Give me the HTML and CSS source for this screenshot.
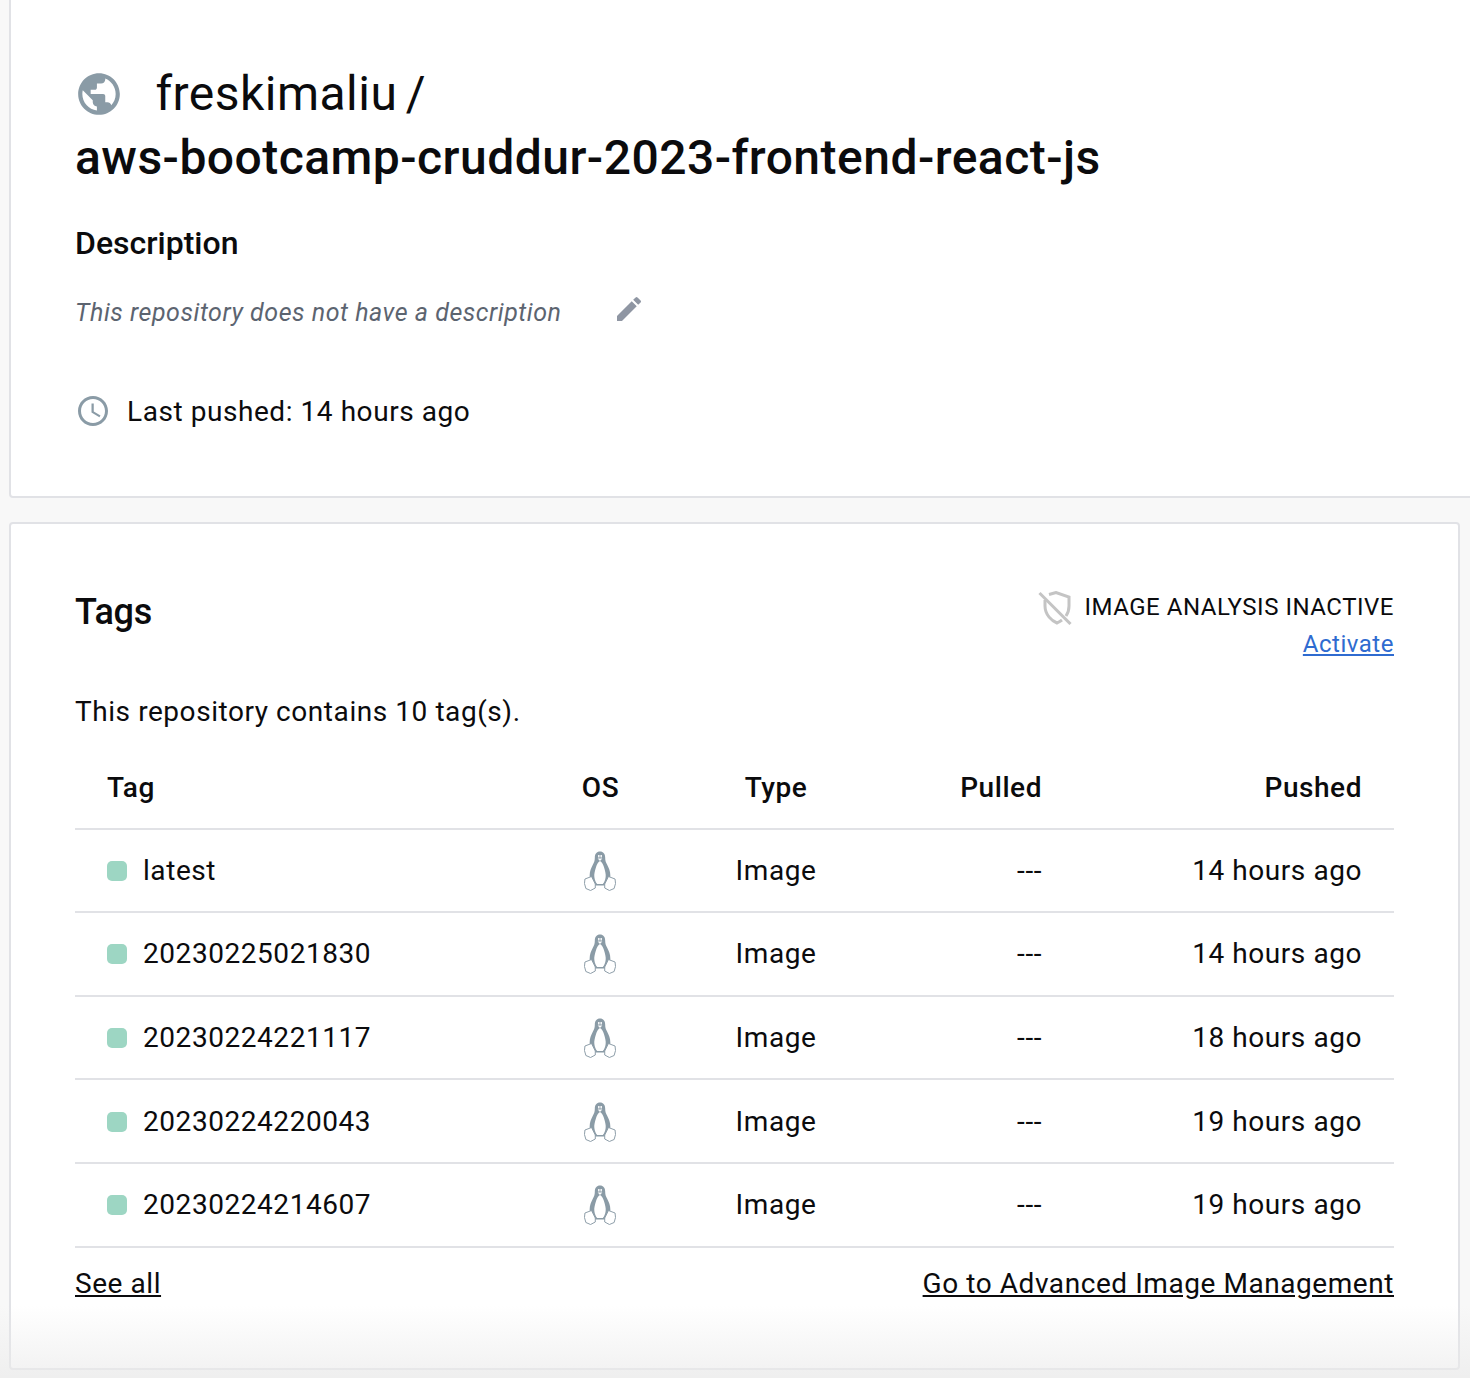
FILE: index.html
```html
<!DOCTYPE html>
<html lang="en">
<head>
<meta charset="UTF-8">
<meta name="viewport" content="width=device-width, initial-scale=1.0">
<title>Repository</title>
<link rel="stylesheet" href="styles.css">
</head>
<body>
    <!-- Repository summary -->
    <div class="card card-top">
        <h1 class="repo-title">
            <svg class="globe" viewBox="0 0 24 24"><path d="M12 2C6.48 2 2 6.48 2 12s4.48 10 10 10 10-4.48 10-10S17.52 2 12 2zm-1 17.930c-3.950-.49-7-3.850-7-7.930 0-.62.08-1.210.21-1.790L9 15v1c0 1.100.9 2 2 2v1.930zm6.900-2.540c-.26-.81-1-1.390-1.900-1.390h-1v-3c0-.55-.45-1-1-1H8v-2h2c.55 0 1-.45 1-1V7h2c1.100 0 2-.9 2-2v-.41c2.930 1.190 5 4.060 5 7.410 0 2.080-.8 3.970-2.100 5.390z"/></svg>
            <span class="repo-owner">freskimaliu /</span>
            <span class="repo-name">aws-bootcamp-cruddur-2023-frontend-react-js</span>
        </h1>
        <h2 class="desc-title">Description</h2>
        <div class="desc-row">
            <em class="desc-text">This repository does not have a description</em>
            <svg class="pencil" viewBox="0 0 24 24"><path d="M3 17.250V21h3.750L17.810 9.940l-3.750-3.750L3 17.250zM20.710 7.040a1 1 0 0 0 0-1.410l-2.340-2.340a1 1 0 0 0-1.410 0l-1.830 1.830 3.750 3.750 1.830-1.830z"/></svg>
        </div>
        <div class="pushed-row">
            <svg class="clock" viewBox="0 0 24 24"><path d="M11.990 2C6.470 2 2 6.480 2 12s4.470 10 9.990 10C17.520 22 22 17.520 22 12S17.520 2 11.990 2zM12 20c-4.420 0-8-3.580-8-8s3.580-8 8-8 8 3.580 8 8-3.580 8-8 8zm.5-13H11v6l5.250 3.150.75-1.230-4.500-2.670V7z"/></svg>
            <span>Last pushed: 14 hours ago</span>
        </div>
    </div>

    <!-- Tags -->
    <div class="card card-tags">
        <div class="tags-head">
            <h2 class="tags-title">Tags</h2>
            <div class="analysis">
                <div class="analysis-status">
                    <svg class="shield" viewBox="0 0 34 34" fill="none" stroke="#c4c4c4" stroke-width="3"><path d="M11 3.500 18 1.500l13 4.500v9c0 4-1 7-3 10M24 29c-2 1.500-4 2.500-5 3-5-2-12-8-12-17V9"/><path d="M1.500 2l31 31"/></svg>
                    <span>IMAGE ANALYSIS INACTIVE</span>
                </div>
                <a class="activate" href="#">Activate</a>
            </div>
        </div>
        <p class="tag-count">This repository contains 10 tag(s).</p>

        <table class="tag-table">
            <tr>
                <th class="col-tag">Tag</th>
                <th class="col-os">OS</th>
                <th class="col-type">Type</th>
                <th class="col-pulled">Pulled</th>
                <th class="col-pushed">Pushed</th>
            </tr>
            <tr>
                <td class="col-tag"><span class="dot"></span>latest</td>
                <td class="col-os"><svg class="tux"><use href="#tux-shape"/></svg></td>
                <td class="col-type">Image</td>
                <td class="col-pulled">---</td>
                <td class="col-pushed">14 hours ago</td>
            </tr>
            <tr>
                <td class="col-tag"><span class="dot"></span>20230225021830</td>
                <td class="col-os"><svg class="tux"><use href="#tux-shape"/></svg></td>
                <td class="col-type">Image</td>
                <td class="col-pulled">---</td>
                <td class="col-pushed">14 hours ago</td>
            </tr>
            <tr>
                <td class="col-tag"><span class="dot"></span>20230224221117</td>
                <td class="col-os"><svg class="tux"><use href="#tux-shape"/></svg></td>
                <td class="col-type">Image</td>
                <td class="col-pulled">---</td>
                <td class="col-pushed">18 hours ago</td>
            </tr>
            <tr>
                <td class="col-tag"><span class="dot"></span>20230224220043</td>
                <td class="col-os"><svg class="tux"><use href="#tux-shape"/></svg></td>
                <td class="col-type">Image</td>
                <td class="col-pulled">---</td>
                <td class="col-pushed">19 hours ago</td>
            </tr>
            <tr>
                <td class="col-tag"><span class="dot"></span>20230224214607</td>
                <td class="col-os"><svg class="tux"><use href="#tux-shape"/></svg></td>
                <td class="col-type">Image</td>
                <td class="col-pulled">---</td>
                <td class="col-pushed">19 hours ago</td>
            </tr>
        </table>

        <div class="tags-foot">
            <a href="#">See all</a>
            <a href="#">Go to Advanced Image Management</a>
        </div>
    </div>

    <!-- Fade at the bottom of the window -->
    <div class="fade"></div>

    <!-- Penguin used by every row -->
    <svg class="defs" width="0" height="0">
        <symbol id="tux-shape" viewBox="0 0 34 40" preserveAspectRatio="none">
            <path d="M17 .5c-3.500 0-5.500 2.500-5.500 6 0 3-.5 4.500-2 7-2 3.500-3.500 7-3.500 11 0 3.500 1 7 3 10h16c2-3 3-6.500 3-10 0-4-1.500-7.500-3.500-11-1.500-2.500-2-4-2-7 0-3.500-2-6-5.500-6z" fill="#8a9ba6"/>
            <path d="M17 10c-2 1-3.500 3.500-4.200 6-1.200 4-2.300 7-1.800 10 .4 3 1.500 5.500 3 7h6c1.500-1.500 2.600-4 3-7 .5-3-.6-6-1.800-10-.7-2.500-2.200-5-4.200-6z" fill="#fff"/>
            <path d="M15 4h1.500v2.500H15zM17.500 4H19v2.500h-1.500zM14.500 7.500h5L17 10z" fill="#fff"/>
            <path d="M1 28l7-2.500 4 7.500v4l-5 2.500-5-2-1.500-5z" fill="#fff" stroke="#8a9ba6"/>
            <path d="M33 28l-7-2.500-4 7.500v4l5 2.500 5-2 1.500-5z" fill="#fff" stroke="#8a9ba6"/>
        </symbol>
    </svg>
</body>
</html>
```

FILE: styles.css
```css
/*General formatting*/
html, body {
    height: 1378px;
    overflow: hidden;
}

body {
    position: relative;
    font-family: Roboto, "Liberation Sans", sans-serif;
    font-size: 28px;
    letter-spacing: 0.56px;
    color: #0b0b0d;
    background-color: #f8f8f8;
    margin: 0;
    padding: 0 10px 0 9px;
}

.card {
    background-color: #fff;
    border: 2px solid #e1e2e6;
    border-radius: 4px;
    box-sizing: border-box;
}

.card-top {
    height: 502px;
    margin-right: -20px;
    margin-top: -4px;
    padding: 64px 64px 0 64px;
}

.card-tags {
    height: 848px;
    margin-top: 24px;
    padding: 60px 64px 0 64px;
}

/* Repository summary */
.repo-title {
    margin: 0;
    font-size: 48px;
    line-height: 63px;
    font-weight: 500;
    letter-spacing: 0.47px;
}

.globe {
    width: 50px;
    height: 50px;
    fill: #8a9ba6;
    vertical-align: -9px;
    margin-left: -1px;
    margin-right: 19px;
}

.repo-owner {
    font-weight: 400;
    word-spacing: -4px;
}

.repo-name {
    display: block;
    margin-top: 1px;
}

.desc-title {
    margin: 32px 0 0 0;
    font-size: 32px;
    line-height: 44px;
    font-weight: 500;
    letter-spacing: 0;
}

.desc-row {
    display: flex;
    align-items: center;
    margin-top: 25px;
    height: 44px;
    color: #5c6470;
}

.desc-text {
    font-size: 25px;
    letter-spacing: 0.53px;
}

.pencil {
    width: 32px;
    height: 32px;
    fill: #8f96a3;
    margin-left: 51px;
    margin-top: -6px;
}

.pushed-row {
    display: flex;
    align-items: center;
    gap: 16px;
    margin-top: 57px;
    height: 40px;
}

.clock {
    width: 36px;
    height: 36px;
    fill: #8a9ba6;
}

/* Tags */
.tags-head {
    display: flex;
    justify-content: space-between;
    height: 108px;
}

.tags-title {
    margin: 3px 0 0 0;
    font-size: 36px;
    line-height: 50px;
    font-weight: 500;
    letter-spacing: -0.2px;
}

.analysis {
    margin-top: 5px;
    text-align: right;
    font-size: 24px;
    line-height: 37px;
    letter-spacing: 0.52px;
}

.analysis-status {
    display: flex;
    align-items: center;
    gap: 12px;
}

.shield {
    width: 34px;
    height: 34px;
}

.activate {
    color: #2f6bd0;
}

.tag-count {
    margin: 0;
    line-height: 40px;
}

.tag-table {
    width: 100%;
    margin-top: 14px;
    border-collapse: collapse;
    table-layout: fixed;
}

.tag-table th, .tag-table td {
    height: 83.6px;
    padding: 0 32px;
    border-bottom: 2px solid #e1e2e6;
    box-sizing: border-box;
    font-weight: 400;
    text-align: center;
}

.tag-table th {
    height: 82.6px;
    padding-top: 2px;
    font-weight: 500;
}

.col-tag {
    width: 470px;
}

.tag-table .col-tag {
    text-align: left;
}

.tag-table .col-pulled, .tag-table .col-pushed {
    text-align: right;
}

.col-os {
    width: 111px;
}

.col-type {
    width: 240px;
}

.col-pulled {
    width: 178px;
}

.dot {
    display: inline-block;
    width: 20px;
    height: 20px;
    border-radius: 5px;
    background-color: #9dd6c3;
    margin-right: 16px;
    vertical-align: -1px;
}

.tux {
    display: block;
    width: 32px;
    height: 40px;
    margin: 1px 0 0 6.5px;
}

.tags-foot {
    display: flex;
    justify-content: space-between;
    margin-top: 16px;
    line-height: 40px;
}

.tags-foot a {
    color: #0b0b0d;
}

.fade {
    position: absolute;
    left: 0;
    right: 0;
    bottom: 0;
    height: 72px;
    background: linear-gradient(to bottom, rgba(235, 235, 235, 0), rgba(235, 235, 235, 0.7));
    pointer-events: none;
}

.defs {
    position: absolute;
}
```
